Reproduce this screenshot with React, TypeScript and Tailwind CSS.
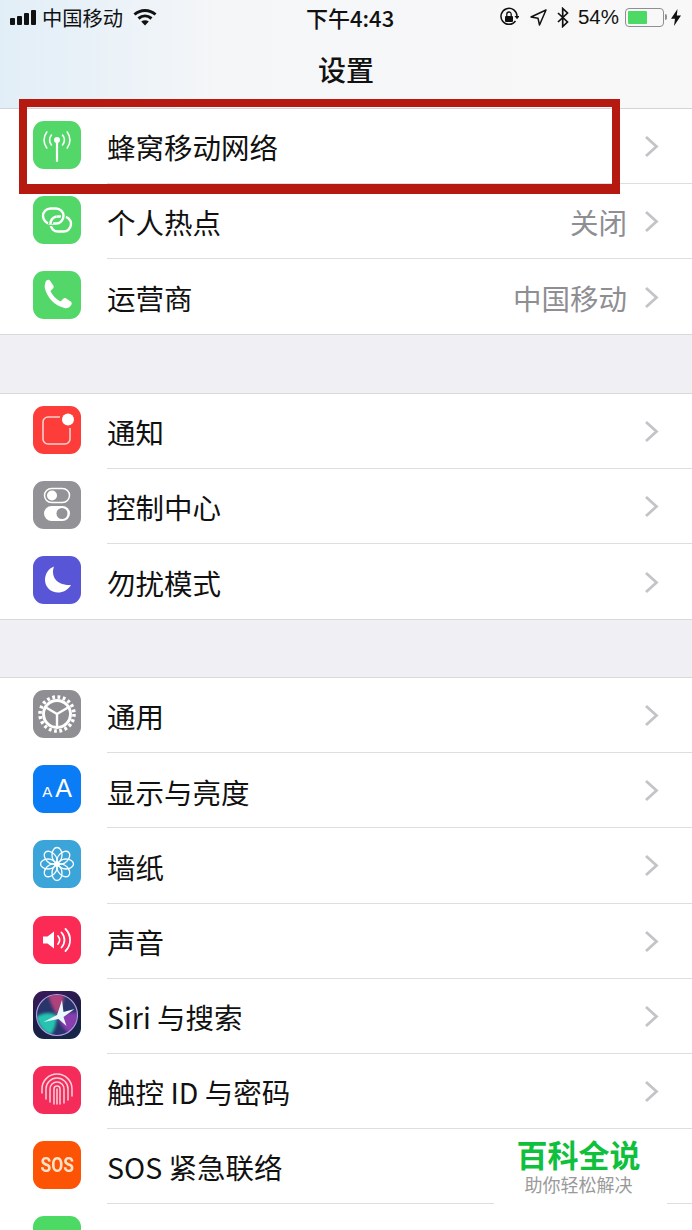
import type { ReactNode } from "react";

const Chevron = () => (
    <svg width="15" height="23" viewBox="0 0 15 23" fill="none" className="shrink-0 mt-[1px]">
        <path d="M2 2l10.5 9.5L2 21" stroke="#c4c4c8" strokeWidth="2.8" />
    </svg>
);

const Icon = ({ bg, children }: { bg: string; children: ReactNode }) => (
    <div className={`w-12 h-12 rounded-[11px] shrink-0 overflow-hidden ${bg}`}>
        <svg width="48" height="48" viewBox="0 0 48 48" fill="none">
            {children}
        </svg>
    </div>
);

const CellularIcon = () => (
    <Icon bg="bg-[#53d769]">
        <g stroke="#fff" strokeLinecap="round" fill="none">
            <path d="M24 20v20" strokeWidth="2.2" />
            <path d="M18.5 24a7.5 7.5 0 0 1 0-10M29.5 14a7.5 7.5 0 0 1 0 10" strokeWidth="1.6" />
            <path d="M13.8 27a13 13 0 0 1 0-16M34.2 11a13 13 0 0 1 0 16" strokeWidth="1.6" />
        </g>
        <circle cx="24" cy="19" r="3" fill="#fff" />
    </Icon>
);

const HotspotIcon = () => (
    <Icon bg="bg-[#53d769]">
        <rect x="17.500" y="20.500" width="20.500" height="15" rx="7.500" stroke="#fff" strokeWidth="2.400" />
        <rect x="10" y="12.500" width="20.500" height="15" rx="7.500" stroke="#53d769" strokeWidth="5" />
        <rect x="10" y="12.500" width="20.500" height="15" rx="7.500" stroke="#fff" strokeWidth="2.400" />
        <path d="M17.500 28c0-3.500 2-6.500 6-7.500" stroke="#53d769" strokeWidth="5" />
        <path d="M17.500 28c0-3.500 2-6.500 6-7.500" stroke="#fff" strokeWidth="2.400" />
    </Icon>
);

const PhoneIcon = () => (
    <Icon bg="bg-[#53d769]">
        <path
            d="M13.5 9.500c1.500-1 3-.8 3.800.4l3 4.600c.7 1.100.5 2.300-.5 3.200l-1.700 1.500c-.5.5-.6 1-.2 1.700 2.200 4 5 6.800 8.800 9 .7.400 1.200.3 1.700-.2l1.600-1.700c.9-1 2.100-1.200 3.200-.5l4.500 2.900c1.200.8 1.400 2.300.4 3.800-1.500 2.300-4 3.500-6.700 2.800-9.800-2.500-17.400-10.300-19.600-20-.5-2.500.5-5.800 1.500-7.500z"
            fill="#fff"
        />
    </Icon>
);

const NotifyIcon = () => (
    <Icon bg="bg-[#fc3d39]">
        <path d="M27 11H15a5 5 0 0 0-5 5v17a5 5 0 0 0 5 5h17a5 5 0 0 0 5-5V22" stroke="#fbd0cc" strokeWidth="1.6" />
        <circle cx="35" cy="13.500" r="6" fill="#fff" />
    </Icon>
);

const ControlIcon = () => (
    <Icon bg="bg-[#929297]">
        <rect x="11.500" y="7.500" width="25" height="14" rx="7" stroke="#fff" strokeWidth="1.500" />
        <circle cx="19" cy="14.500" r="5" fill="#fff" />
        <rect x="11" y="25" width="26" height="15" rx="7.500" fill="#fff" />
        <circle cx="29" cy="32.500" r="5.500" fill="#929297" />
    </Icon>
);

const MoonIcon = () => (
    <Icon bg="bg-[#5856d6]">
        <path d="M21 10.500c-3 8 .5 19 17 18.500-3 5-8 7.500-13 7.500-7 0-13-5.500-13-12.500 0-6 3.500-11.500 9-13.500z" fill="#fff" />
    </Icon>
);

const GearIcon = () => (
    <Icon bg="bg-[#8e8e93]">
        <circle cx="24" cy="24" r="17" stroke="#fff" strokeWidth="3.600" strokeDasharray="2.800 2.540" />
        <circle cx="24" cy="24" r="13.500" stroke="#fff" strokeWidth="3" />
        <path d="M24 24v12.500M24 24l-11-6.500M24 24l11-6.500" stroke="#fff" strokeWidth="2.400" />
    </Icon>
);

const DisplayIcon = () => (
    <div className="w-12 h-12 rounded-[11px] shrink-0 bg-[#0a7cf5] text-white flex items-baseline justify-center pt-[11px] font-['Liberation_Sans',sans-serif]">
        <span className="text-[15px] leading-[24px] mr-[3px]">A</span>
        <span className="text-[25px] leading-[24px]">A</span>
    </div>
);

const WallpaperIcon = () => (
    <Icon bg="bg-[#3ba5d9]">
        {[0, 45, 90, 135, 180, 225, 270, 315].map((a) => (
            <ellipse key={a} cx="24" cy="15" rx="5" ry="7.500" transform={`rotate(${a} 24 24)`} stroke="#fff" strokeWidth="1.300" />
        ))}
        <circle cx="24" cy="24" r="2" fill="#fff" />
    </Icon>
);

const SoundIcon = () => (
    <Icon bg="bg-[#fb2b55]">
        <path d="M10 20.500h4.500l6.500-5v17l-6.500-5H10z" fill="#fff" />
        <g stroke="#fff" strokeWidth="1.800" strokeLinecap="round">
            <path d="M25 20a6 6 0 0 1 0 8" />
            <path d="M28.500 16.500a11 11 0 0 1 0 15" />
            <path d="M32.500 13a15.500 15.500 0 0 1 0 22" />
        </g>
    </Icon>
);

const SiriIcon = () => (
    <div className="w-12 h-12 rounded-[11px] shrink-0 overflow-hidden bg-[linear-gradient(160deg,#3a1a5c_0%,#1c1d45_50%,#14284a_100%)]">
        <svg width="48" height="48" viewBox="0 0 48 48" fill="none">
            <defs>
                <filter id="siri-blur" x="-20%" y="-20%" width="140%" height="140%">
                    <feGaussianBlur stdDeviation="1.800" />
                </filter>
                <filter id="siri-soft" x="-20%" y="-20%" width="140%" height="140%">
                    <feGaussianBlur stdDeviation="0.700" />
                </filter>
                <clipPath id="siri-clip">
                    <circle cx="24" cy="24" r="20.500" />
                </clipPath>
            </defs>
            <circle cx="24" cy="24" r="20.500" fill="#27356b" />
            <g clipPath="url(#siri-clip)">
                <path d="M3 26c7-5 14-5 21-2 0 7-2 14-6 20C11 42 5 34 3 26z" fill="#27c4b0" filter="url(#siri-blur)" />
                <path d="M45 22c-7-1-14 0-21 2 2 7 6 14 12 18 6-5 10-12 9-20z" fill="#a13fc0" fillOpacity="0.8" filter="url(#siri-blur)" />
                <path d="M15 4c2 7 5 14 9 20 4-6 7-13 7-20-5-2-11-2-16 0z" fill="#d1437f" fillOpacity="0.8" filter="url(#siri-blur)" />
                <path d="M24 24L29 9l1.500 12 11-3-11 8 3 9-8-7-15 3z" fill="#eaf8ff" filter="url(#siri-soft)" />
            </g>
            <circle cx="24" cy="24" r="20.500" stroke="#b59be0" strokeWidth="1.100" />
        </svg>
    </div>
);

const TouchIdIcon = () => (
    <Icon bg="bg-[#f52c5a]">
        <g stroke="#fbd3dc" strokeWidth="1.500" strokeLinecap="round">
            <path d="M9 27v-4a15 15 0 0 1 30 0v7" />
            <path d="M13 33v-10a11 11 0 0 1 22 0v11" />
            <path d="M17 36V23a7 7 0 0 1 14 0v14" />
            <path d="M21 38V23a3 3 0 0 1 6 0v15" />
            <path d="M24 23v15" />
        </g>
    </Icon>
);

const SosIcon = () => (
    <div className="w-12 h-12 rounded-[11px] shrink-0 bg-[#fc5305] flex items-center justify-center">
        <span className="inline-block scale-x-[0.87] text-[#ffe3c9] font-['Roboto',sans-serif] font-bold text-[20px] leading-none">SOS</span>
    </div>
);

type Row = { icon: ReactNode; label: string; value?: string };

const groups: Row[][] = [
    [
        { icon: <CellularIcon />, label: "蜂窝移动网络" },
        { icon: <HotspotIcon />, label: "个人热点", value: "关闭" },
        { icon: <PhoneIcon />, label: "运营商", value: "中国移动" },
    ],
    [
        { icon: <NotifyIcon />, label: "通知" },
        { icon: <ControlIcon />, label: "控制中心" },
        { icon: <MoonIcon />, label: "勿扰模式" },
    ],
    [
        { icon: <GearIcon />, label: "通用" },
        { icon: <DisplayIcon />, label: "显示与亮度" },
        { icon: <WallpaperIcon />, label: "墙纸" },
        { icon: <SoundIcon />, label: "声音" },
        { icon: <SiriIcon />, label: "Siri 与搜索" },
        { icon: <TouchIdIcon />, label: "触控 ID 与密码" },
        { icon: <SosIcon />, label: "SOS 紧急联络" },
        { icon: <Icon bg="bg-[#4cd964]">{null}</Icon>, label: "" },
    ],
];

const SettingsRow = ({ row, last, height }: { row: Row; last: boolean; height: string }) => (
    <div className={`flex items-center pl-[33px] ${height}`}>
        <div className="mb-[3px]">{row.icon}</div>
        <div className={`ml-[26px] flex-1 h-full flex items-center pr-[33px] ${last ? "" : "border-b border-[#dedee0]"}`}>
            <span className="flex-1 pt-[3px] text-[28.5px] text-[#111] leading-none whitespace-nowrap">{row.label}</span>
            {row.value && <span className="pt-[3px] mr-[17px] text-[28.5px] text-[#8e8e93] leading-none">{row.value}</span>}
            {row.label && <Chevron />}
        </div>
    </div>
);

const StatusBar = () => (
    <div className="h-[34px] flex items-center relative px-[10px] text-[#111]">
        <div className="flex items-end gap-[2px] h-[15px]">
            <div className="w-[5px] h-[7px] rounded-[1px] bg-[#111]" />
            <div className="w-[5px] h-[9px] rounded-[1px] bg-[#111]" />
            <div className="w-[5px] h-[12px] rounded-[1px] bg-[#111]" />
            <div className="w-[5px] h-[15px] rounded-[1px] bg-[#111]" />
        </div>
        <span className="ml-[6px] text-[20.3px] leading-none">中国移动</span>
        <svg width="24" height="18" viewBox="0 0 24 18" fill="none" className="ml-[10px]">
            <path d="M1.500 6.500c6-5.500 15-5.500 21 0" stroke="#111" strokeWidth="3" />
            <path d="M5.500 10.500c4-3.500 9-3.500 13 0" stroke="#111" strokeWidth="3" />
            <path d="M12 17.500l-3.800-4c2.300-1.800 5.300-1.800 7.600 0z" fill="#111" />
        </svg>
        <span className="absolute left-[306px] top-[5px] text-[22px] leading-[24px] font-medium">下午4:43</span>
        <div className="ml-auto flex items-center">
            <svg width="20" height="20" viewBox="0 0 20 20" fill="none" className="mr-[11px]">
                <path d="M16.500 14A8 8 0 1 1 18 9.500" stroke="#111" strokeWidth="1.500" />
                <path d="M15.500 9h5l-2.500 3.200z" fill="#111" />
                <rect x="6" y="9" width="8" height="6" rx="1" fill="#111" />
                <path d="M7.800 9V7.200a2.200 2.200 0 0 1 4.400 0V9" stroke="#111" strokeWidth="1.300" />
            </svg>
            <svg width="17" height="17" viewBox="0 0 17 17" fill="none" className="mr-[9px]">
                <path d="M16 1L1 8l7 1.200L9.500 16z" stroke="#111" strokeWidth="1.500" strokeLinejoin="round" />
            </svg>
            <svg width="14" height="21" viewBox="0 0 13 21" fill="none" className="mr-[8px]">
                <path d="M1.500 6l9.500 9-4.800 4.500V1.500L11 6l-9.500 9" stroke="#111" strokeWidth="1.700" />
            </svg>
            <span className="text-[20.5px] leading-none font-['Liberation_Sans',sans-serif]">54%</span>
            <div className="ml-[6px] w-[39px] h-[19px] rounded-[4px] border border-[#8e8e93] p-[2px]">
                <div className="w-[19px] h-full rounded-[1px] bg-[#4cd964]" />
            </div>
            <div className="ml-[1px] w-[2px] h-[6px] rounded-r-[2px] bg-[#8e8e93]" />
            <svg width="10" height="17" viewBox="0 0 10 17" className="ml-[4px] mr-[1px]">
                <path d="M6.500 0L0 9.800h4L3 17l7-10.500H5.800z" fill="#111" />
            </svg>
        </div>
    </div>
);

export default function App() {
    return (
        <div className="relative w-[692px] h-[1230px] overflow-hidden bg-[#efeff4] font-['Noto_Sans_CJK_SC','Liberation_Sans',sans-serif]">
            <header className="h-[109px] border-b border-[#d4d4d6] bg-[linear-gradient(90deg,#e2eef7_0%,#e8f1f8_12%,#f5f6f8_32%,#f8f8f8_100%)]">
                <StatusBar />
                <h1 className="mt-[15px] text-center text-[28px] leading-[40px] font-medium text-[#111]">设置</h1>
            </header>

            <section className="bg-white border-b border-[#d9d9dc]">
                {groups[0].map((row, i) => (
                    <SettingsRow key={row.label} row={row} height="h-[75px]" last={i === groups[0].length - 1} />
                ))}
            </section>
            <section className="mt-[58px] bg-white border-y border-[#d9d9dc]">
                {groups[1].map((row, i) => (
                    <SettingsRow key={row.label} row={row} height="h-[75px]" last={i === groups[1].length - 1} />
                ))}
            </section>
            <section className="mt-[57px] bg-white border-y border-[#d9d9dc]">
                {groups[2].map((row, i) => (
                    <SettingsRow key={row.label} row={row} height="h-[75.2px]" last={i === groups[2].length - 1} />
                ))}
            </section>

            {/* red highlight drawn over the first row */}
            <div className="absolute left-[19px] top-[99px] w-[601px] h-[95px] border-[8px] border-b-[10px] border-[#b5190f]" />

            {/* watermark */}
            <div className="absolute left-[494px] top-[1129px] w-[173px] h-[75px] bg-white flex flex-col items-center pr-[4px]">
                <span className="mt-[6px] text-[31px] leading-[38px] font-bold text-[#0fc03c]">百科全说</span>
                <span className="text-[18px] leading-[22px] text-[#9a9a9a]">助你轻松解决</span>
            </div>
        </div>
    );
}
